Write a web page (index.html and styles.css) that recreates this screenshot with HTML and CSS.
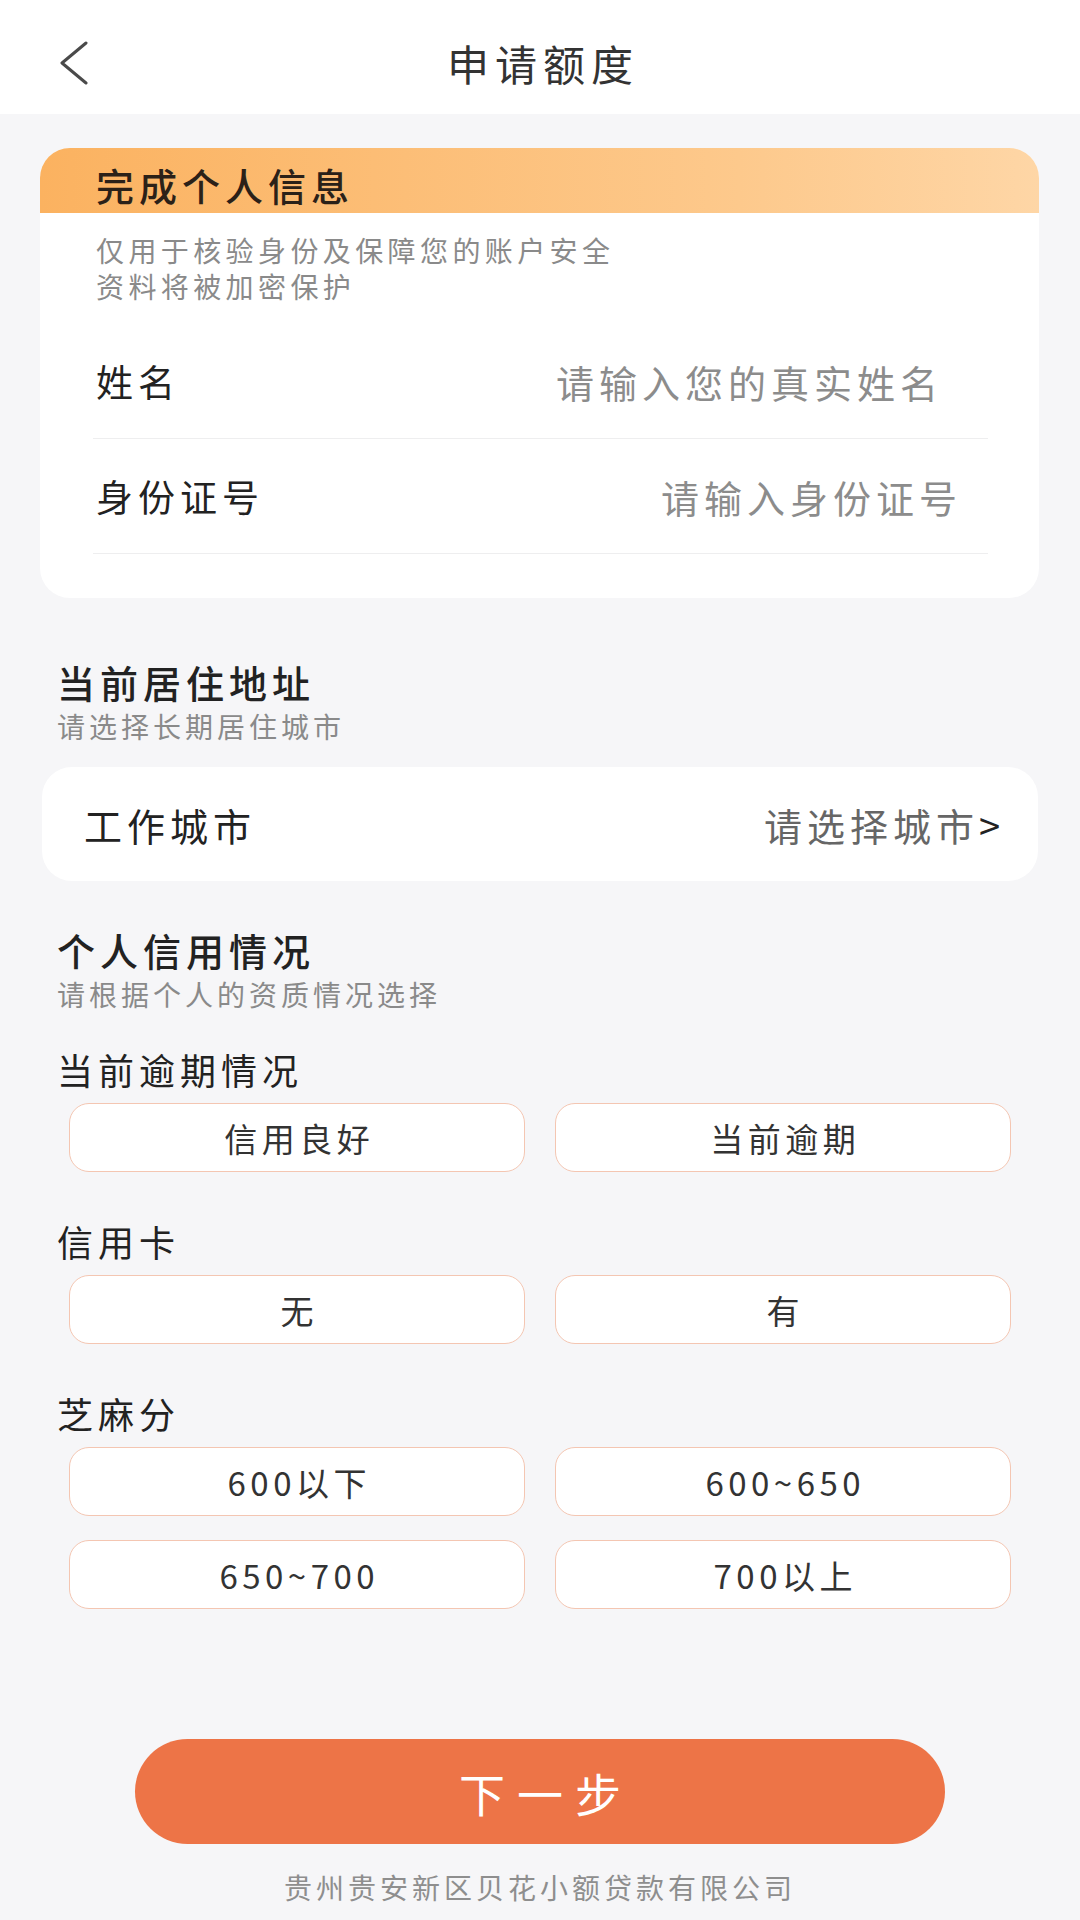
FILE: index.html
```html
<!DOCTYPE html>
<html lang="zh-CN">
<head>
  <meta charset="UTF-8">
  <meta name="viewport" content="width=device-width, initial-scale=1.0">
  <title>申请额度</title>
  <link rel="stylesheet" href="styles.css">
</head>
<body>
  <header class="nav">
    <a class="nav-back" href="#" aria-label="返回">
      <svg width="30" height="44" viewBox="0 0 30 44">
        <polyline points="27,2 3,22 27,42" fill="none" stroke="#4a4a4a" stroke-width="3" stroke-linecap="round" stroke-linejoin="round" />
      </svg>
    </a>
    <h1 class="nav-title">申请额度</h1>
    <span></span>
  </header>

  <main class="page">
    <section class="info-card">
      <div class="info-head">完成个人信息</div>
      <p class="info-desc">仅用于核验身份及保障您的账户安全<br>资料将被加密保护</p>
      <div class="fields">
        <label class="field">
          <span class="field-label">姓名</span>
          <input class="field-input" type="text" placeholder="请输入您的真实姓名">
        </label>
        <label class="field">
          <span class="field-label">身份证号</span>
          <input class="field-input field-input-id" type="text" placeholder="请输入身份证号">
        </label>
      </div>
    </section>

    <div class="section-head">
      <h2>当前居住地址</h2>
      <p>请选择长期居住城市</p>
    </div>
    <div class="city-card">
      <span class="city-label">工作城市</span>
      <span class="city-pick">请选择城市<b>&gt;</b></span>
    </div>

    <div class="section-head">
      <h2>个人信用情况</h2>
      <p>请根据个人的资质情况选择</p>
    </div>

    <div class="group">
      <div class="group-label">当前逾期情况</div>
      <div class="options">
        <button class="option">信用良好</button>
        <button class="option">当前逾期</button>
      </div>
    </div>

    <div class="group">
      <div class="group-label">信用卡</div>
      <div class="options">
        <button class="option">无</button>
        <button class="option">有</button>
      </div>
    </div>

    <div class="group">
      <div class="group-label">芝麻分</div>
      <div class="options">
        <button class="option">600以下</button>
        <button class="option">600~650</button>
        <button class="option">650~700</button>
        <button class="option">700以上</button>
      </div>
    </div>

    <button class="next-btn">下一步</button>
    <p class="company">贵州贵安新区贝花小额贷款有限公司</p>
  </main>
</body>
</html>
```

FILE: styles.css
```css
* {
  box-sizing: border-box;
}

body {
  margin: 0;
  font-family: "Noto Sans CJK SC", "Noto Sans", sans-serif;
  background: #f6f6f8;
  color: #222;
}

.nav {
  height: 114px;
  padding-top: 12px;
  background: #fff;
  display: grid;
  grid-template-columns: 1fr auto 1fr;
  align-items: center;
}

.nav-back {
  display: flex;
  padding-left: 59px;
}

.nav-title {
  margin: 0;
  font-size: 42px;
  font-weight: 400;
  letter-spacing: 6px;
  text-indent: 6px;
  line-height: 1;
  color: #333;
}

.page {
  padding-top: 34px;
  padding-bottom: 20px;
}

/* personal info card */
.info-card {
  margin: 0 41px 0 40px;
  padding-bottom: 44px;
  background: #fff;
  border-radius: 30px;
  overflow: hidden;
}

.info-head {
  height: 65px;
  padding: 8px 0 0 56px;
  display: flex;
  align-items: center;
  background: linear-gradient(90deg, #fbb260, #fdc98c 70%, #fed6a6);
  font-size: 38px;
  font-weight: 500;
  letter-spacing: 5px;
  color: #2b2118;
}

.info-desc {
  margin: 19px 0 0;
  padding-left: 56px;
  font-size: 28px;
  letter-spacing: 4.4px;
  line-height: 36px;
  color: #8a8a8a;
}

.fields {
  margin: 20px 51px 0 53px;
}

.field {
  height: 115px;
  display: flex;
  align-items: center;
  border-bottom: 1px solid #eeeeef;
}

.field-label {
  padding-left: 3px;
  font-size: 37px;
  letter-spacing: 5px;
  white-space: nowrap;
}

.field-input {
  flex: 1;
  min-width: 0;
  padding: 0 45px 0 0;
  border: none;
  outline: none;
  background: transparent;
  text-align: right;
  font-family: inherit;
  font-size: 38px;
  letter-spacing: 5px;
  color: #222;
}

.field-input-id {
  padding-right: 26px;
}

.field-input::placeholder {
  color: #8c8c8c;
}

/* section titles */
.section-head {
  margin-top: 62px;
  padding-left: 57px;
}

.section-head h2 {
  margin: 0;
  font-size: 38px;
  font-weight: 500;
  letter-spacing: 5px;
  line-height: 44px;
}

.section-head p {
  margin: 4px 0 0;
  font-size: 28px;
  letter-spacing: 4px;
  line-height: 36px;
  color: #8a8a8a;
}

.section-head + .section-head,
.city-card + .section-head {
  margin-top: 47px;
}

.city-card {
  margin: 23px 42px 0;
  height: 114px;
  padding: 0 33px 0 42px;
  background: #fff;
  border-radius: 30px;
  display: flex;
  align-items: center;
  justify-content: space-between;
  font-size: 38px;
  letter-spacing: 5px;
}

.city-pick {
  color: #666;
}

.city-pick b {
  font-weight: 400;
  color: #222;
}

/* option groups */
.group {
  margin-top: 47px;
}

.section-head + .group {
  margin-top: 35px;
}

.group-label {
  padding-left: 57px;
  font-size: 36px;
  letter-spacing: 5px;
  line-height: 44px;
}

.options {
  margin: 12px 69px 0;
  display: grid;
  grid-template-columns: 1fr 1fr;
  column-gap: 30px;
  row-gap: 24px;
}

.option {
  height: 69px;
  border: 1.5px solid #f4c6b2;
  border-radius: 20px;
  background: #fff;
  font-family: inherit;
  font-size: 33px;
  letter-spacing: 4.5px;
  text-indent: 4.5px;
  color: #333;
  cursor: pointer;
}

.next-btn {
  display: block;
  width: 810px;
  height: 105px;
  margin: 130px auto 0;
  border: none;
  border-radius: 53px;
  background: #ed7447;
  color: #fff;
  font-family: inherit;
  font-size: 46px;
  letter-spacing: 12px;
  text-indent: 12px;
  cursor: pointer;
}

.company {
  margin: 25px 0 0;
  text-align: center;
  font-size: 28px;
  letter-spacing: 4px;
  line-height: 36px;
  color: #8e8e8e;
}
```
